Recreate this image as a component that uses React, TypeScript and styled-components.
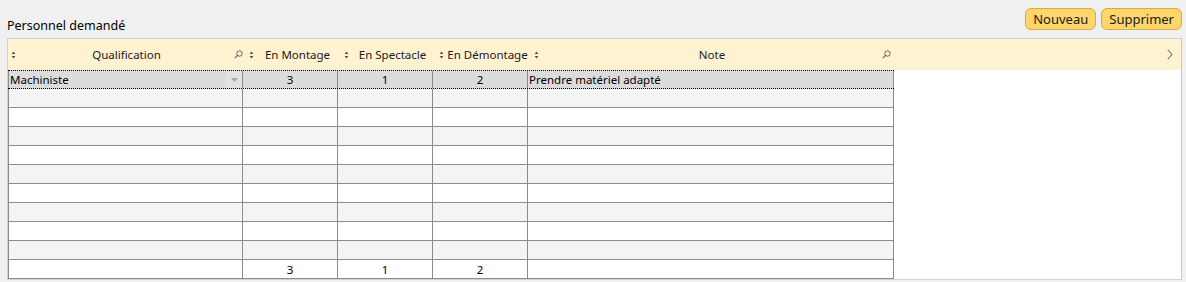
import styled, { createGlobalStyle } from 'styled-components';

const GlobalStyle = createGlobalStyle`
  html, body {
    margin: 0;
    padding: 0;
    background: #f0f0f0;
    font-family: 'Noto Sans', 'Open Sans', sans-serif;
    color: #000;
  }
`;

// header cells sit a few px to the right of the body columns, like the original grid
const columns = [
  { key: 'qualification', label: 'Qualification', width: 235, headWidth: 238, search: true, align: 'left' },
  { key: 'montage', label: 'En Montage', width: 95, headWidth: 95, search: false, align: 'center' },
  { key: 'spectacle', label: 'En Spectacle', width: 95, headWidth: 95, search: false, align: 'center' },
  { key: 'demontage', label: 'En Démontage', width: 95, headWidth: 95, search: false, align: 'center' },
  { key: 'note', label: 'Note', width: 366, headWidth: 363, search: true, align: 'left' },
] as const;

type Row = Record<string, string>;

const rows: Row[] = [
  { qualification: 'Machiniste', montage: '3', spectacle: '1', demontage: '2', note: 'Prendre matériel adapté' },
  ...Array.from({ length: 9 }, () => ({})),
];

const totals: Row = { montage: '3', spectacle: '1', demontage: '2' };

const SortIcon = () => (
  <svg width="5" height="8" viewBox="0 0 5 8">
    <path d="M2.5 0.5 L4.5 3 L0.5 3 Z" fill="#555" />
    <path d="M2.5 7.5 L4.5 5 L0.5 5 Z" fill="#555" />
  </svg>
);

const SearchIcon = () => (
  <svg width="9" height="9" viewBox="0 0 9 9">
    <circle cx="5.5" cy="3.5" r="2.7" fill="none" stroke="#666" strokeWidth="1" />
    <path d="M3.6 5.4 L0.8 8.2" stroke="#666" strokeWidth="1.1" />
  </svg>
);

const App = () => {
  return (
    <>
      <GlobalStyle />
      <Page>
        <TopBar>
          <Title>Personnel demandé</Title>
          <Actions>
            <ActionButton>Nouveau</ActionButton>
            <ActionButton>Supprimer</ActionButton>
          </Actions>
        </TopBar>
        <Panel>
          <HeaderRow>
            {columns.map((c) => (
              <HeaderCell key={c.key} w={c.headWidth}>
                <SortIcon />
                <HeaderLabel>{c.label}</HeaderLabel>
                {c.search ? <SearchIcon /> : null}
              </HeaderCell>
            ))}
            <HeaderFill>
              <svg width="6" height="11" viewBox="0 0 6 11">
                <path d="M0.8 0.8 L5 5.5 L0.8 10.2" fill="none" stroke="#7a7a7a" strokeWidth="1.1" />
              </svg>
            </HeaderFill>
          </HeaderRow>
          <Body>
            <Table>
              {rows.map((r, i) => (
                <BodyRow key={i} odd={i % 2 === 1} selected={i === 0}>
                  {columns.map((c, ci) => (
                    <Cell key={c.key} w={c.width} align={c.align} first={ci === 0}>
                      <CellText>{r[c.key] ?? ''}</CellText>
                      {i === 0 && ci === 0 ? (
                        <DropButton>
                          <svg width="7" height="4" viewBox="0 0 7 4">
                            <path d="M0 0 L7 0 L3.5 4 Z" fill="#a8a8a8" />
                          </svg>
                        </DropButton>
                      ) : null}
                    </Cell>
                  ))}
                </BodyRow>
              ))}
              <BodyRow odd={false} selected={false}>
                {columns.map((c, ci) => (
                  <Cell key={c.key} w={c.width} align={c.align} first={ci === 0}>
                    <CellText>{totals[c.key] ?? ''}</CellText>
                  </Cell>
                ))}
              </BodyRow>
            </Table>
          </Body>
        </Panel>
      </Page>
    </>
  );
};

const Page = styled.div`
  width: 1186px;
  height: 282px;
  box-sizing: border-box;
  padding: 0 4px 0 7px;
  display: flex;
  flex-direction: column;
`;

const TopBar = styled.div`
  height: 38px;
  display: flex;
  justify-content: space-between;
  align-items: flex-start;
`;

const Title = styled.div`
  font-size: 12.5px;
  margin-top: 17px;
  line-height: 17px;
`;

const Actions = styled.div`
  display: flex;
  gap: 5px;
  margin-top: 8px;
`;

const ActionButton = styled.button`
  height: 22px;
  padding: 0 7px;
  box-sizing: border-box;
  background: #fdd56a;
  border: 1px solid #d6ab4a;
  border-radius: 6px;
  font-family: 'Noto Sans', 'Open Sans', sans-serif;
  font-size: 13px;
  color: #1a1a1a;
  line-height: 18px;
  cursor: pointer;
`;

const Panel = styled.div`
  width: 1175px;
  height: 242px;
  box-sizing: border-box;
  border: 1px solid #d2d2d2;
  border-right-color: #c8c8c8;
  background: #fff;
  display: flex;
  flex-direction: column;
`;

const HeaderRow = styled.div`
  height: 31px;
  display: flex;
  background: #fff2d0;
  font-size: 11.5px;
`;

const HeaderCell = styled.div<{ w: number }>`
  width: ${({ w }) => w}px;
  flex-shrink: 0;
  display: flex;
  align-items: center;
  padding: 0 3px 0 3px;
  box-sizing: border-box;
`;

const HeaderLabel = styled.div`
  flex: 1;
  margin-left: 3px;
  text-align: center;
  white-space: nowrap;
  color: #1a1a1a;
`;

const HeaderFill = styled.div`
  flex: 1;
  display: flex;
  justify-content: flex-end;
  align-items: center;
  padding-right: 8px;
`;

const Body = styled.div`
  flex: 1;
  background: #fff;
`;

const Table = styled.div`
  display: flex;
  flex-direction: column;
  width: 886px;
`;

const BodyRow = styled.div<{ odd: boolean; selected: boolean }>`
  display: flex;
  height: 19px;
  box-sizing: border-box;
  background: ${({ odd, selected }) => (selected ? '#dcdcdc' : odd ? '#f4f4f4' : '#fff')};
  border-top: ${({ selected }) => (selected ? '1px dotted #000' : 'none')};
  border-bottom: ${({ selected }) => (selected ? '1px dotted #000' : '1px solid #8c8c8c')};
  font-size: 11.5px;
`;

const Cell = styled.div<{ w: number; align: string; first: boolean }>`
  width: ${({ w }) => w}px;
  flex-shrink: 0;
  box-sizing: border-box;
  border-right: 1px solid #8c8c8c;
  border-left: ${({ first }) => (first ? '1px solid #8c8c8c' : 'none')};
  display: flex;
  align-items: center;
  justify-content: ${({ align }) => (align === 'center' ? 'center' : 'space-between')};
  padding: 0 1px;
  overflow: hidden;
  white-space: nowrap;
`;

const CellText = styled.span`
  line-height: 17px;
`;

const DropButton = styled.div`
  width: 16px;
  height: 17px;
  background: #e2e2e2;
  display: flex;
  align-items: center;
  justify-content: center;
  margin-right: -1px;
`;

export default App;
